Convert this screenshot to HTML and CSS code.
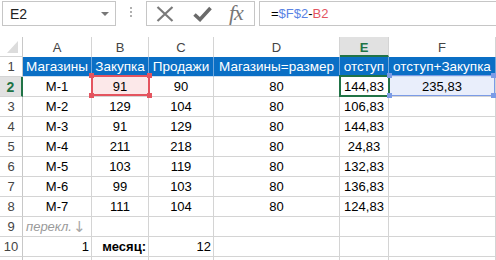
FILE: index.html
```html
<!DOCTYPE html>
<html>
<head>
<meta charset="utf-8">
<link rel="stylesheet" href="styles.css">
</head>
<body>
<div class="app">
  <div class="fbar">
    <div class="namebox">
      <span class="name">E2</span>
      <svg class="caret" width="8" height="4" viewBox="0 0 8 4"><polygon points="0,0 8,0 4,4" fill="#777"/></svg>
    </div>
    <div class="grip">
      <svg width="3" height="11" viewBox="0 0 3 11"><rect x="0" y="0" width="2" height="2" fill="#b0b0b0"/><rect x="0" y="4" width="2" height="2" fill="#b0b0b0"/><rect x="0" y="8" width="2" height="2" fill="#b0b0b0"/></svg>
    </div>
    <div class="fbtns">
      <svg class="ico-x" width="18" height="16" viewBox="0 0 18 16"><path d="M1.5 1 L16.5 15 M16.5 1 L1.5 15" stroke="#7a7a7a" stroke-width="2.2" fill="none"/></svg>
      <svg class="ico-ok" width="19" height="16" viewBox="0 0 19 16"><path d="M1.5 8.5 L7 13.5 L17.5 2" stroke="#6a6a6a" stroke-width="3.6" fill="none"/></svg>
      <span class="fx">fx</span>
    </div>
    <div class="formula"><span>=</span><span class="ref-blue">$F$2</span><span>-</span><span class="ref-red">B2</span></div>
  </div>

  <div class="sheet">
    <div class="c corner"><svg width="11" height="12" viewBox="0 0 11 12"><polygon points="11,0 11,12 0,12" fill="#dcdcdc"/></svg></div>
    <div class="c ch">A</div>
    <div class="c ch">B</div>
    <div class="c ch">C</div>
    <div class="c ch">D</div>
    <div class="c ch ch-sel">E</div>
    <div class="c ch">F</div>

    <div class="c rh">1</div>
    <div class="c hd">Магазины</div>
    <div class="c hd">Закупка</div>
    <div class="c hd">Продажи</div>
    <div class="c hd">Магазины=размер</div>
    <div class="c hd">отступ</div>
    <div class="c hd">отступ+Закупка</div>

    <div class="c rh rh-sel">2</div>
    <div class="c ctr">M-1</div>
    <div class="c ctr ref-b2">91<span class="frame frame-red"></span><span class="hdl hr tl"></span><span class="hdl hr tr"></span><span class="hdl hr bl"></span><span class="hdl hr br"></span></div>
    <div class="c ctr">90</div>
    <div class="c ctr">80</div>
    <div class="c ctr active">144,83<span class="frame frame-green"></span></div>
    <div class="c ctr ref-f2">235,83<span class="frame frame-blue"></span><span class="hdl hb tl"></span><span class="hdl hb tr"></span><span class="hdl hb bl"></span><span class="hdl hb br"></span></div>

    <div class="c rh">3</div>
    <div class="c ctr">M-2</div>
    <div class="c ctr">129</div>
    <div class="c ctr">104</div>
    <div class="c ctr">80</div>
    <div class="c ctr">106,83</div>
    <div class="c"></div>

    <div class="c rh">4</div>
    <div class="c ctr">M-3</div>
    <div class="c ctr">91</div>
    <div class="c ctr">129</div>
    <div class="c ctr">80</div>
    <div class="c ctr">144,83</div>
    <div class="c"></div>

    <div class="c rh">5</div>
    <div class="c ctr">M-4</div>
    <div class="c ctr">211</div>
    <div class="c ctr">218</div>
    <div class="c ctr">80</div>
    <div class="c ctr">24,83</div>
    <div class="c"></div>

    <div class="c rh">6</div>
    <div class="c ctr">M-5</div>
    <div class="c ctr">103</div>
    <div class="c ctr">119</div>
    <div class="c ctr">80</div>
    <div class="c ctr">132,83</div>
    <div class="c"></div>

    <div class="c rh">7</div>
    <div class="c ctr">M-6</div>
    <div class="c ctr">99</div>
    <div class="c ctr">103</div>
    <div class="c ctr">80</div>
    <div class="c ctr">136,83</div>
    <div class="c"></div>

    <div class="c rh">8</div>
    <div class="c ctr">M-7</div>
    <div class="c ctr">111</div>
    <div class="c ctr">104</div>
    <div class="c ctr">80</div>
    <div class="c ctr">124,83</div>
    <div class="c"></div>

    <div class="c rh">9</div>
    <div class="c note">перекл.<span class="arrow">↓</span></div>
    <div class="c"></div>
    <div class="c"></div>
    <div class="c"></div>
    <div class="c"></div>
    <div class="c"></div>

    <div class="c rh">10</div>
    <div class="c rgt">1</div>
    <div class="c rgt bold">месяц:</div>
    <div class="c rgt">12</div>
    <div class="c"></div>
    <div class="c"></div>
    <div class="c"></div>

    <div class="c rh"></div>
    <div class="c"></div>
    <div class="c"></div>
    <div class="c"></div>
    <div class="c"></div>
    <div class="c"></div>
    <div class="c"></div>
  </div>
</div>
</body>
</html>
```

FILE: styles.css
```css
* { box-sizing: border-box; }
html, body { margin: 0; padding: 0; background: #fff; }
body { width: 496px; height: 260px; overflow: hidden; font-family: "Liberation Sans", Arial, sans-serif; }

.app { width: 496px; height: 260px; overflow: hidden; }

.fbar {
  display: flex;
  align-items: stretch;
  height: 37px;
  padding: 1px 0 11px 2px;
}
.namebox {
  width: 114px;
  border: 1px solid #c6c6c6;
  display: flex;
  align-items: center;
  justify-content: space-between;
  padding: 0 6px 0 7px;
  font-size: 14px;
  color: #222;
}
.caret { display: block; margin-top: 1px; }
.grip {
  width: 30px;
  display: flex;
  align-items: center;
  justify-content: center;
  padding-bottom: 2px;
}
.fbtns {
  width: 109px;
  border: 1px solid #c6c6c6;
  display: flex;
  align-items: center;
  padding-left: 9px;
}
.ico-x { display: block; margin-top: 1px; }
.ico-ok { display: block; margin-left: 19px; margin-top: 1px; }
.fx {
  margin-left: 17px;
  font-family: "Liberation Serif", "Times New Roman", serif;
  font-style: italic;
  font-size: 22px;
  color: #777;
  letter-spacing: -1px;
  line-height: 1;
  margin-top: -2px;
}
.formula {
  flex: 1;
  margin-left: 4px;
  border: 1px solid #c6c6c6;
  border-right: none;
  display: flex;
  align-items: center;
  padding-left: 11px;
  font-size: 13px;
  color: #000;
}
.ref-blue { color: #5a83e4; }
.ref-red { color: #e4545f; }

.sheet {
  display: grid;
  grid-template-columns: 23px 69px 57px 65px 126px 49px 107px;
  grid-auto-rows: 20px;
}
.c {
  border-right: 1px solid #d4d4d4;
  border-bottom: 1px solid #d4d4d4;
  display: flex;
  align-items: center;
  padding: 0 3px;
  font-size: 13px;
  color: #000;
  white-space: nowrap;
  position: relative;
}
.corner {
  border-right-color: #c8c8c8;
  align-items: flex-end;
  justify-content: flex-end;
  padding: 0 4px 3px 0;
}
.corner svg { display: block; }
.ch {
  justify-content: center;
  color: #444;
  border-bottom: none;
}
.ch-sel {
  background: #e1e1e1;
  color: #217346;
  font-weight: bold;
  border-bottom: 2px solid #217346;
  padding-top: 2px;
}
.rh {
  justify-content: center;
  color: #444;
  padding: 0;
  border-right-color: #c8c8c8;
}
.rh-sel {
  background: #e1e1e1;
  color: #217346;
  font-weight: bold;
  border-right: 2px solid #217346;
  font-size: 14px;
}
.hd {
  background: #0a6fc5;
  color: #fff;
  justify-content: center;
  border-right-color: #6fa6dc;
  border-bottom-color: #cfdff0;
  padding: 0 1px;
  font-size: 13.5px;
}
.ctr { justify-content: center; }
.rgt { justify-content: flex-end; padding-right: 2px; }
.bold { font-weight: bold; }
.note { font-style: italic; color: #9a9a9a; font-size: 13px; }
.arrow {
  font-style: normal;
  font-family: "DejaVu Sans", sans-serif;
  font-size: 15px;
  color: #a8a8a8;
  margin-left: 1px;
}

.ref-b2 { background: #fce8e9; }
.ref-f2 { background: #e9eefb; }

.frame {
  position: absolute;
  pointer-events: none;
}
.frame-red { top: -2px; left: -1px; right: -2px; bottom: 0; border: 2px solid #e4545f; }
.frame-blue { top: -2px; left: -1px; right: 0; bottom: 0; border: 1px solid #7b9be6; }
.frame-green { top: -2px; left: -1px; right: -2px; bottom: -1px; border: 2px solid #217346; z-index: 2; }

.hdl {
  position: absolute;
  width: 5px;
  height: 5px;
  z-index: 3;
}
.hr { background: #e4545f; }
.hb { background: #7b9be6; }
.tl { top: -4px; left: -3px; }
.tr { top: -4px; right: -4px; }
.bl { bottom: -2px; left: -3px; }
.br { bottom: -2px; right: -4px; }
.ref-f2 .tr, .ref-f2 .br { right: -1px; }
.ref-f2 .tl, .ref-f2 .bl { left: -2px; }
```
